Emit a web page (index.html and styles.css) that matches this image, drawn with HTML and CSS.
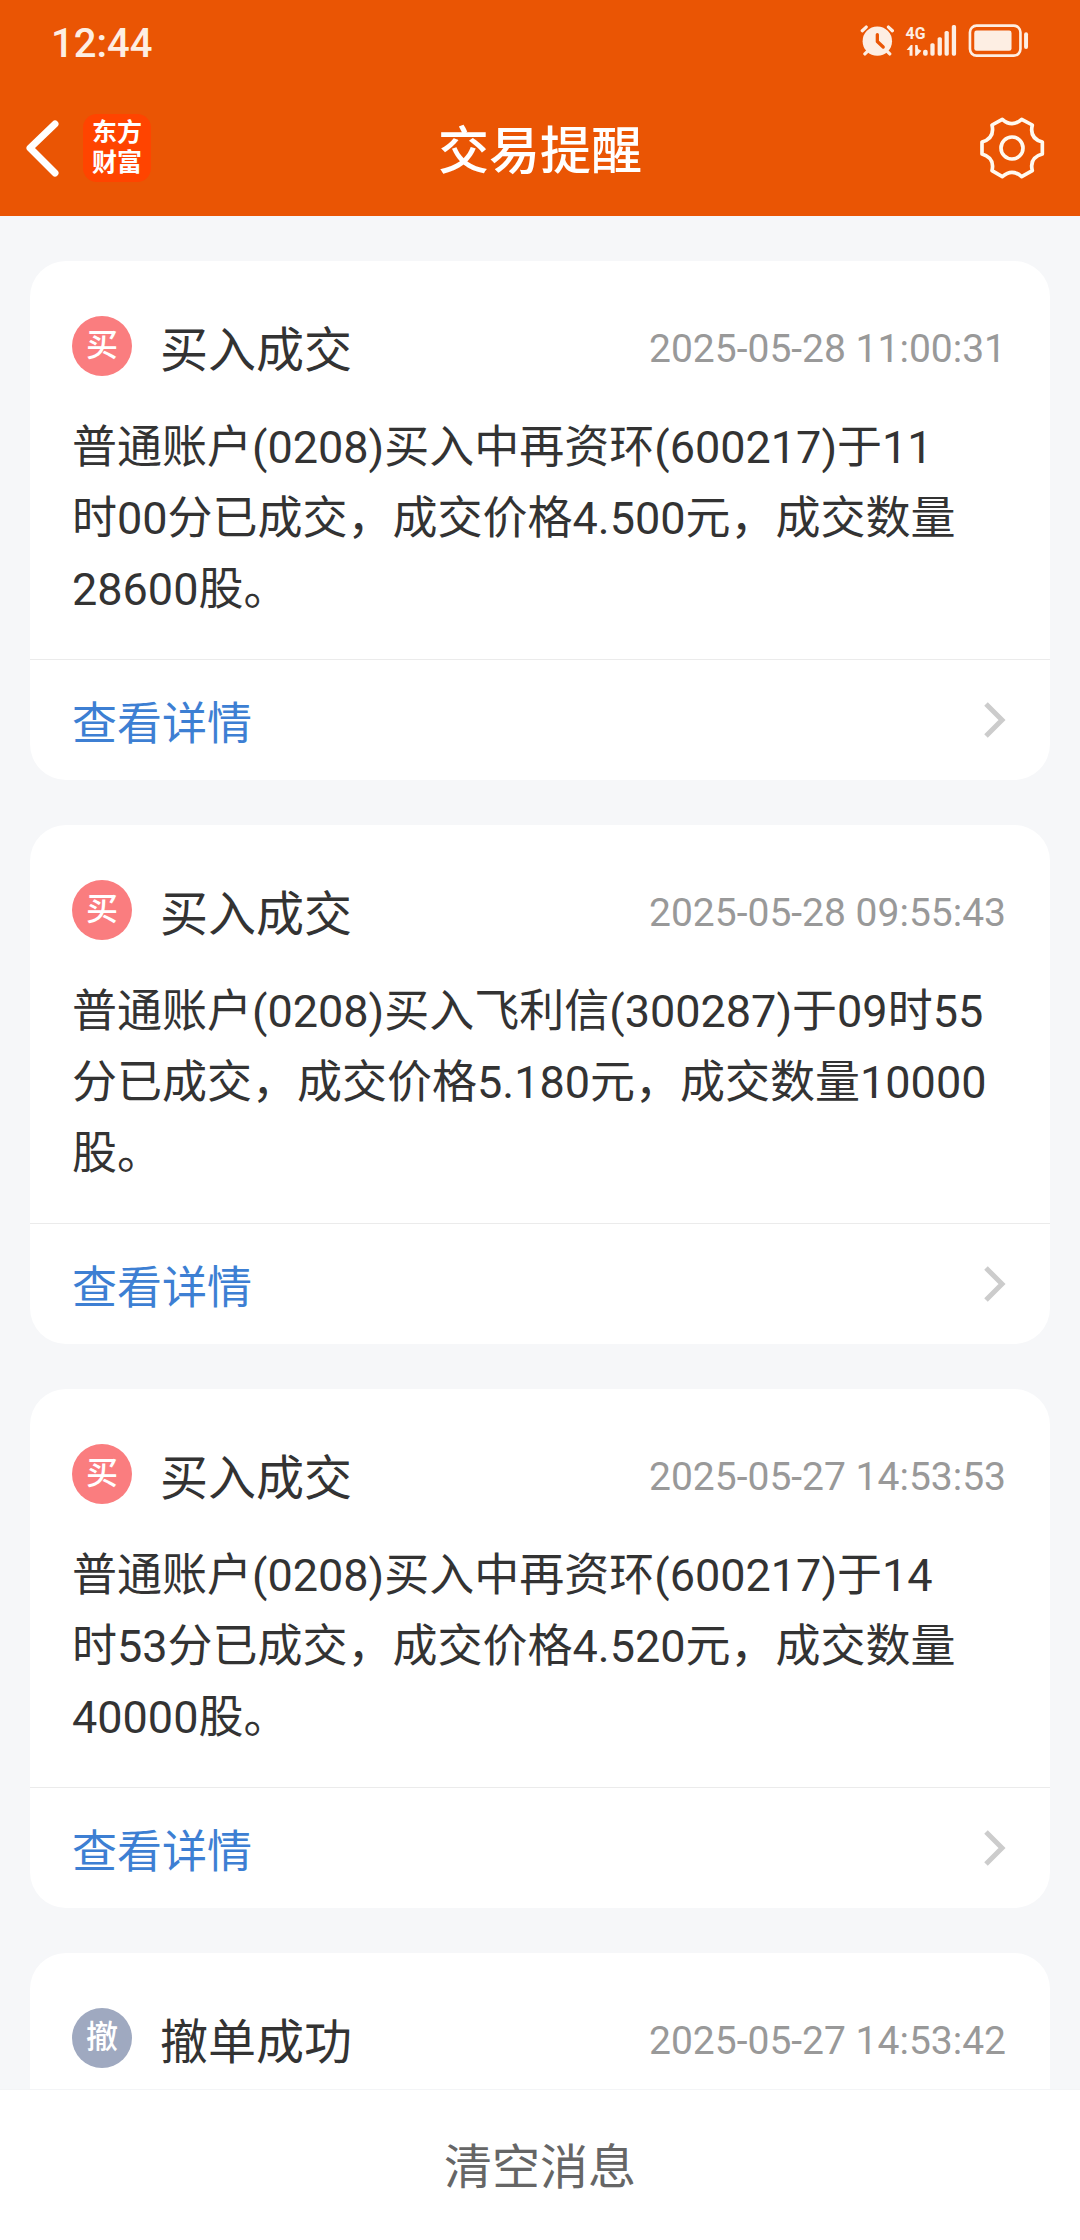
FILE: index.html
```html
<!DOCTYPE html>
<html lang="zh-CN">
<head>
    <meta charset="UTF-8">
    <meta name="viewport" content="width=device-width, initial-scale=1.0">
    <title>交易提醒</title>
    <link rel="stylesheet" href="styles.css">
</head>
<body>

<header>
    <!-- 状态栏 -->
    <div class="status-bar">
        <span class="clock">12:44</span>
        <div class="status-icons">
            <svg width="34" height="33" viewBox="64 70 104 100" aria-hidden="true">
                <circle cx="117" cy="122" r="45" fill="#fdeee3"/>
                <path d="M71 90L83 79M151 79L163 90M79 161L90 150M144 150L155 161" stroke="#fdeee3" stroke-width="10" stroke-linecap="round"/>
                <path d="M117 102V123L135 140" fill="none" stroke="#ea5504" stroke-width="10" stroke-linecap="round" stroke-linejoin="round"/>
            </svg>
            <svg width="52" height="33" viewBox="196 70 156 100" fill="#fdeee3" aria-hidden="true">
                <text class="network" x="197" y="115">4G</text>
                <path d="M200 149L213 134H218V166H209V149ZM226 134H233L235 146L245 151L231 166H226Z"/>
                <rect x="250" y="148" width="14" height="18" rx="6"/>
                <rect x="272" y="128" width="13" height="38" rx="5"/>
                <rect x="294" y="110" width="13" height="56" rx="5"/>
                <rect x="315" y="91" width="13" height="75" rx="5"/>
                <rect x="337" y="73" width="13" height="93" rx="5"/>
            </svg>
            <svg width="61" height="33" viewBox="384 71 183 100" aria-hidden="true">
                <rect x="389" y="76" width="153" height="91" rx="20" fill="none" stroke="#fdeee3" stroke-width="8"/>
                <rect x="402" y="91" width="113" height="61" rx="7" fill="#fdeee3"/>
                <rect x="553" y="96" width="12" height="51" rx="6" fill="#fdeee3"/>
            </svg>
        </div>
    </div>

    <!-- 导航栏 -->
    <nav class="nav-bar">
        <div class="nav-left">
            <button class="icon-btn" aria-label="返回">
                <svg width="36" height="60" viewBox="0 0 36 60">
                    <path d="M30 6L5 30L30 55" fill="none" stroke="#fff" stroke-width="7" stroke-linecap="round" stroke-linejoin="round"/>
                </svg>
            </button>
            <a class="logo" href="#">东方<br>财富</a>
        </div>
        <h1>交易提醒</h1>
        <button class="icon-btn settings" aria-label="设置">
            <svg width="66" height="64" viewBox="118 76 198 192" fill="none" stroke="#fffaf0" stroke-width="11" stroke-linejoin="round">
                <path d="M157 103L188 86Q217 112 246 86L278 103Q268 143 308 154V190Q268 201 278 240L246 258Q217 232 188 258L157 240Q166 201 127 190V154Q166 143 157 103Z"/>
                <circle cx="217" cy="172" r="33"/>
            </svg>
        </button>
    </nav>
</header>

<!-- 消息列表 -->
<main class="list">
    <article class="card">
        <div class="card-head">
            <span class="badge buy">买</span>
            <h2>买入成交</h2>
            <time>2025-05-28 11:00:31</time>
        </div>
        <p>普通账户(0208)买入中再资环(600217)于11<br>时00分已成交，成交价格4.500元，成交数量<br>28600股。</p>
        <a class="detail" href="#">
            查看详情
            <svg width="24" height="40" viewBox="0 0 24 40">
                <path d="M2 4L18 20L2 36" fill="none" stroke="#ccc" stroke-width="5"/>
            </svg>
        </a>
    </article>

    <article class="card">
        <div class="card-head">
            <span class="badge buy">买</span>
            <h2>买入成交</h2>
            <time>2025-05-28 09:55:43</time>
        </div>
        <p>普通账户(0208)买入飞利信(300287)于09时55<br>分已成交，成交价格5.180元，成交数量10000<br>股。</p>
        <a class="detail" href="#">
            查看详情
            <svg width="24" height="40" viewBox="0 0 24 40">
                <path d="M2 4L18 20L2 36" fill="none" stroke="#ccc" stroke-width="5"/>
            </svg>
        </a>
    </article>

    <article class="card">
        <div class="card-head">
            <span class="badge buy">买</span>
            <h2>买入成交</h2>
            <time>2025-05-27 14:53:53</time>
        </div>
        <p>普通账户(0208)买入中再资环(600217)于14<br>时53分已成交，成交价格4.520元，成交数量<br>40000股。</p>
        <a class="detail" href="#">
            查看详情
            <svg width="24" height="40" viewBox="0 0 24 40">
                <path d="M2 4L18 20L2 36" fill="none" stroke="#ccc" stroke-width="5"/>
            </svg>
        </a>
    </article>

    <article class="card">
        <div class="card-head">
            <span class="badge cancel">撤</span>
            <h2>撤单成功</h2>
            <time>2025-05-27 14:53:42</time>
        </div>
    </article>
</main>

<button class="clear-btn">清空消息</button>

</body>
</html>
```
FILE: styles.css
```css
:root {
    --color-primary: #ea5504;
    --color-bg: #f6f7f9;
    --color-text: #333;
    --color-muted: #999;
    --color-link: #3d7fd3;
}

* {
    box-sizing: border-box;
}

body {
    margin: 0;
    height: 100vh;
    display: flex;
    flex-direction: column;
    background-color: var(--color-bg);
    color: var(--color-text);
    font-family: Roboto, "Noto Sans CJK SC", sans-serif;
}

h1, h2, p {
    margin: 0;
    font-weight: 400;
}

a {
    text-decoration: none;
}

button {
    padding: 0;
    border: none;
    background: none;
    font-family: inherit;
    cursor: pointer;
}

svg {
    display: block;
}

header {
    flex: none;
    background-color: var(--color-primary);
    color: #fff;
}

.status-bar {
    display: flex;
    justify-content: space-between;
    align-items: center;
    height: 80px;
    padding: 0 51px;
}

.clock {
    padding-top: 6px;
    font-size: 40px;
    font-weight: 500;
    color: #fdeee3;
}

.status-icons {
    display: flex;
    gap: 11px;
}

.network {
    font-size: 48px;
    font-weight: 700;
}

.nav-bar {
    display: grid;
    grid-template-columns: 1fr auto 1fr;
    align-items: center;
    height: 136px;
    padding: 0 25px;
}

.nav-left {
    display: flex;
    align-items: center;
    gap: 22px;
}

.nav-bar h1 {
    padding-top: 8px;
    font-size: 51px;
    font-weight: 500;
    line-height: 72px;
}

.logo {
    width: 68px;
    padding: 4px 0;
    border-radius: 14px;
    background-color: #ff4400;
    color: #fff;
    font-size: 25px;
    font-weight: 700;
    line-height: 30px;
    text-align: center;
}

.settings {
    justify-self: end;
    padding-right: 10px;
}

.list {
    flex: 1;
    min-height: 0;
    padding: 45px 30px 0;
    overflow-y: auto;
    scrollbar-width: none;
}

.card {
    min-height: 519px;
    margin-bottom: 45px;
    border-radius: 36px;
    background-color: #fff;
}

.card-head {
    display: flex;
    align-items: center;
    height: 151px;
    padding: 18px 44px 0 42px;
}

.badge {
    width: 60px;
    height: 60px;
    margin-right: 28px;
    border-radius: 50%;
    color: #fff;
    font-size: 32px;
    font-weight: 500;
    line-height: 58px;
    text-align: center;
}

.buy {
    background-color: #fa7d7f;
}

.cancel {
    background-color: #9fa9c0;
}

.card h2 {
    padding-top: 10px;
    font-size: 48px;
    line-height: 60px;
}

.card time {
    margin-left: auto;
    padding-top: 6px;
    color: var(--color-muted);
    font-size: 39px;
}

.card p {
    padding: 0 42px 34px;
    font-size: 45px;
    line-height: 71px;
    white-space: nowrap;
}

.detail {
    display: flex;
    justify-content: space-between;
    align-items: center;
    height: 121px;
    padding: 0 42px;
    border-top: 1px solid #ebebeb;
    color: var(--color-link);
    font-size: 45px;
}

.clear-btn {
    flex: none;
    height: 151px;
    padding-bottom: 4px;
    border-top: 1px solid #f3f4f6;
    background-color: #fff;
    color: #666;
    font-size: 48px;
}
```
